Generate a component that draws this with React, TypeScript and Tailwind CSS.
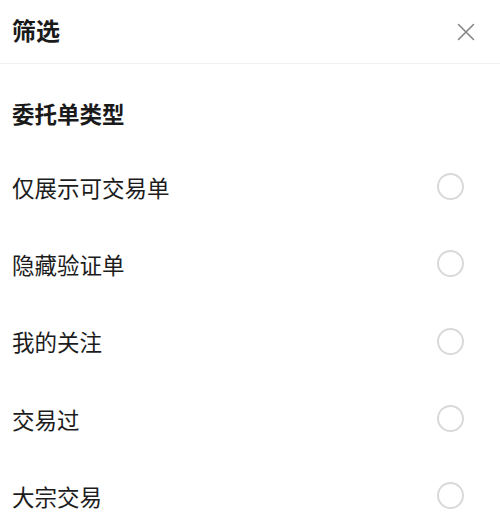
const options = ['仅展示可交易单', '隐藏验证单', '我的关注', '交易过', '大宗交易']

function CloseIcon() {
  return (
    <svg width="18" height="18" viewBox="0 0 18 18" fill="none" stroke="#858585" strokeWidth="1.6" strokeLinecap="round">
      <path d="M1.5 1.5 L16.5 16.5 M16.5 1.5 L1.5 16.5" />
    </svg>
  )
}

function OptionRow({ label }: { label: string }) {
  return (
    <div className="flex h-[77.3px] items-center justify-between pl-3 pr-[36px]">
      <span className="text-[22.5px] leading-8 text-[#1c1c1c]">{label}</span>
      <span className="h-[27px] w-[27px] rounded-full border-2 border-[#d9d9d9]" />
    </div>
  )
}

export default function App() {
  return (
    <div
      className="h-[521px] w-[500px] overflow-hidden bg-white"
      style={{ fontFamily: '"Noto Sans CJK SC", "Noto Sans", sans-serif' }}
    >
      <div className="flex h-[64px] items-center justify-between border-b border-[#f0f0f0] pl-3 pr-[25px]">
        <h1 className="-mt-1 text-[24px] font-bold leading-8 text-[#1a1a1a]">筛选</h1>
        <CloseIcon />
      </div>
      <div className="pt-[33px]">
        <h2 className="pl-3 text-[22.5px] font-bold leading-8 text-[#1a1a1a]">委托单类型</h2>
        <div className="mt-[19px]">
          {options.map((o) => (
            <OptionRow key={o} label={o} />
          ))}
        </div>
      </div>
    </div>
  )
}
